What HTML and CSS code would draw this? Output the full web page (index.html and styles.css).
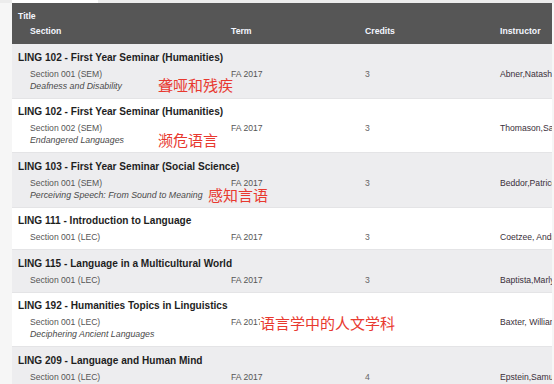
FILE: index.html
```html
<!DOCTYPE html>
<html>
<head>
<meta charset="utf-8">
<link rel="stylesheet" href="styles.css">
</head>
<body>
<div class="topbar"><div class="tab"></div></div>
<div class="table">
  <div class="head">
    <div class="head-title">Title</div>
    <div class="cols">
      <div>Section</div><div>Term</div><div>Credits</div><div>Instructor</div>
    </div>
  </div>

  <div class="row alt">
    <div class="title">LING 102 - First Year Seminar (Humanities)</div>
    <div class="cols">
      <div class="sec">Section 001 (SEM)<div class="topic">Deafness and Disability</div></div>
      <div>FA 2017</div><div class="cr">3</div><div class="inst">Abner,Natasha</div>
    </div>
    <span class="note n1">聋哑和残疾</span>
  </div>

  <div class="row">
    <div class="title">LING 102 - First Year Seminar (Humanities)</div>
    <div class="cols">
      <div class="sec">Section 002 (SEM)<div class="topic">Endangered Languages</div></div>
      <div>FA 2017</div><div class="cr">3</div><div class="inst">Thomason,Sarah</div>
    </div>
    <span class="note n2">濒危语言</span>
  </div>

  <div class="row alt">
    <div class="title">LING 103 - First Year Seminar (Social Science)</div>
    <div class="cols">
      <div class="sec">Section 001 (SEM)<div class="topic">Perceiving Speech: From Sound to Meaning</div></div>
      <div>FA 2017</div><div class="cr">3</div><div class="inst">Beddor,Patrice</div>
    </div>
    <span class="note n3">感知言语</span>
  </div>

  <div class="row">
    <div class="title">LING 111 - Introduction to Language</div>
    <div class="cols">
      <div class="sec">Section 001 (LEC)</div>
      <div>FA 2017</div><div class="cr">3</div><div class="inst">Coetzee, Andries</div>
    </div>
  </div>

  <div class="row alt">
    <div class="title">LING 115 - Language in a Multicultural World</div>
    <div class="cols">
      <div class="sec">Section 001 (LEC)</div>
      <div>FA 2017</div><div class="cr">3</div><div class="inst">Baptista,Marlyse</div>
    </div>
  </div>

  <div class="row">
    <div class="title">LING 192 - Humanities Topics in Linguistics</div>
    <div class="cols">
      <div class="sec">Section 001 (LEC)<div class="topic">Deciphering Ancient Languages</div></div>
      <div>FA 2017</div><div class="cr">3</div><div class="inst">Baxter, William</div>
    </div>
    <span class="note n6">语言学中的人文学科</span>
  </div>

  <div class="row alt">
    <div class="title">LING 209 - Language and Human Mind</div>
    <div class="cols">
      <div class="sec">Section 001 (LEC)</div>
      <div>FA 2017</div><div class="cr">4</div><div class="inst">Epstein,Samuel</div>
    </div>
  </div>
</div>
</body>
</html>
```

FILE: styles.css
```css
html, body {
  margin: 0;
  padding: 0;
  background: #f6f6f6;
  font-family: "Liberation Sans", Arial, sans-serif;
  overflow: hidden;
}
.topbar {
  height: 3px;
  padding-left: 12px;
  background: #ececec;
}
.tab {
  width: 86px;
  height: 3px;
  background: #fff;
}
.table {
  margin-left: 12px;
  width: 540px;
  overflow: hidden;
  background: #fff;
}
.head {
  background: #565656;
  color: #f4f6ff;
  font-weight: bold;
  font-size: 8.7px;
  line-height: 12px;
  padding: 7px 0 7px;
}
.head-title {
  padding-left: 6px;
}
.head .cols {
  margin-top: 3px;
}
.cols {
  display: grid;
  grid-template-columns: 201px 134px 135px 1fr;
  padding-left: 18px;
  white-space: nowrap;
}
.row {
  position: relative;
  padding: 7.5px 0 6px;
  border-bottom: 1px solid #e4e4e6;
  background: #fff;
  font-size: 8.6px;
  line-height: 12px;
  color: #555;
}
.row.alt {
  background: #ededef;
}
.title {
  padding-left: 6px;
  font-size: 10.1px;
  font-weight: bold;
  color: #1e1e1e;
  white-space: nowrap;
}
.row .cols {
  margin-top: 4px;
}
.topic {
  font-style: italic;
  color: #4a4a4a;
  font-size: 8.8px;
}
.cr {
  color: #666;
}
.inst {
  color: #3a2f3a;
}
.note {
  position: absolute;
  font-family: "Noto Sans CJK SC", sans-serif;
  font-size: 15px;
  line-height: 15px;
  color: #e8392f;
  white-space: nowrap;
}
.n1 { left: 146px; top: 33px; }
.n2 { left: 146px; top: 33px; }
.n3 { left: 196px; top: 34px; background: #ededef; }
.n6 { left: 248px; top: 22px; background: #fff; }
```
